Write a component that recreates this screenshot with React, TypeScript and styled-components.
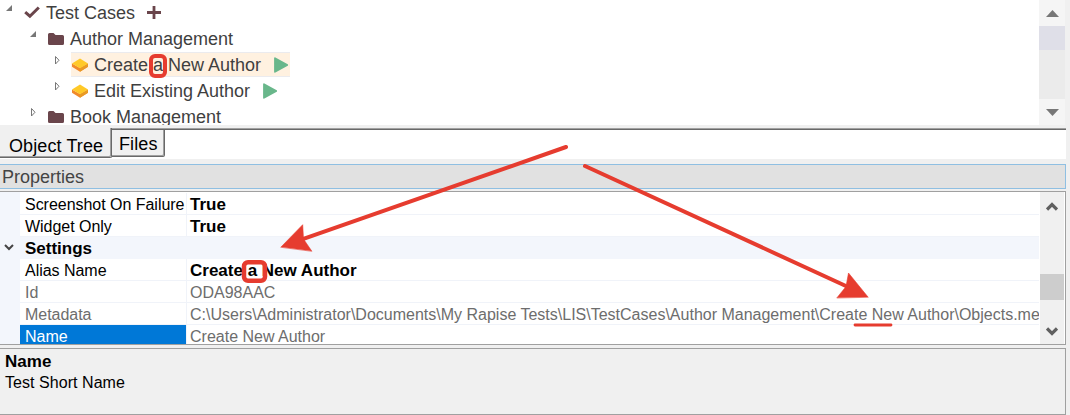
import React from "react";
import styled, { createGlobalStyle } from "styled-components";

const RED = "#e63c2f";

const GlobalStyle = createGlobalStyle`
  * { box-sizing: border-box; }
  body {
    margin: 0;
    background: #f0f0f0;
    font-family: "Liberation Sans", Arial, sans-serif;
    overflow: hidden;
  }
  svg { display: block; flex: none; }
`;

const Window = styled.div`
  position: relative;
  width: 1070px;
  height: 415px;
  overflow: hidden;
  display: flex;
  flex-direction: column;
  background: #f0f0f0;
`;

const TreePane = styled.div`
  display: flex;
  width: 1065px;
  height: 125px;
  background: #fff;
  overflow: hidden;
`;

const TreeList = styled.div`
  flex: 1;
  overflow: hidden;
`;

const TreeRow = styled.div<{ $indent: number }>`
  display: flex;
  height: 26px;
  padding-left: ${(p) => p.$indent}px;
`;

const Expander = styled.span`
  width: 17px;
  height: 26px;
  flex: none;
`;

const TreeItem = styled.div<{ $selected?: boolean }>`
  display: flex;
  align-items: center;
  height: 25px;
  padding: 0 2px 0 1px;
  background: ${(p) =>
    p.$selected ? "linear-gradient(#ebebee 1px, #fff1e0 1px, #fff1e0 24px, #ebebee 24px)" : "transparent"};
`;

const TreeLabel = styled.span<{ $width: number }>`
  width: ${(p) => p.$width}px;
  margin: 0 11px 0 6px;
  flex: none;
  font-size: 18px;
  line-height: 24px;
  white-space: nowrap;
  color: #3f3f3f;
`;

const TreeScroll = styled.div`
  display: flex;
  flex-direction: column;
  width: 26px;
  background: #ebebeb;
`;

const ScrollButton = styled.div`
  display: flex;
  align-items: center;
  justify-content: center;
  height: 26px;
  background: #f5f5f5;
`;

const TreeThumb = styled.div`
  height: 24px;
  margin-bottom: auto;
  background: #dfdfe8;
`;

const TabStrip = styled.div`
  display: flex;
  align-items: flex-start;
  width: 1066px;
  height: 31px;
  margin-top: 3px;
  border-top: 1px solid #a0a0a0;
  background: #fff;
  box-shadow: inset 0 1px #696969;
`;

const Tab = styled.div<{ $active?: boolean }>`
  display: flex;
  align-items: center;
  width: ${(p) => (p.$active ? 112 : 53)}px;
  height: ${(p) => (p.$active ? 30 : 28)}px;
  margin-top: ${(p) => (p.$active ? -1 : 0)}px;
  padding: ${(p) => (p.$active ? "7px 0 0 9px" : "2px 0 0 7px")};
  border: solid #696969;
  border-width: ${(p) => (p.$active ? "0 1px 1px 0" : "1px 1px 1px 0")};
  border-radius: 0 0 2px 0;
  box-shadow: inset -1px -1px #a0a0a0;
  background: #f0f0f0;
  color: #000;
  font-size: 18px;
  letter-spacing: ${(p) => (p.$active ? 0.1 : 0.1)}px;
  white-space: nowrap;
`;

const PropertiesHeader = styled.div`
  width: 1066px;
  height: 25px;
  margin-top: 5px;
  padding-left: 2px;
  border: 1px solid #8fbfe2;
  border-left: 0;
  background: #e1e1e1;
  color: #444;
  font-size: 18px;
  line-height: 24px;
`;

const GridPane = styled.div`
  display: flex;
  width: 1066px;
  height: 154px;
  margin-top: 2px;
  border: 1px solid #a0a0a0;
  border-left: 0;
  background: #fff;
`;

const Grid = styled.div`
  flex: none;
  width: 1039px;
  height: 152px;
  padding-top: 1px;
  overflow: hidden;
  background: linear-gradient(90deg, #f3f6fc 20px, #fff 20px);
`;

const GridRow = styled.div`
  display: flex;
  height: 22px;
  padding-left: 20px;
  font-size: 16px;
  line-height: 23px;
  white-space: nowrap;
`;

const KeyCell = styled.div<{ $muted?: boolean; $selected?: boolean }>`
  width: 167px;
  flex: none;
  padding-left: 5px;
  border-right: 1px solid #f0f3f9;
  border-bottom: 1px solid #f0f3f9;
  background: ${(p) => (p.$selected ? "#0078d7" : "#fff")};
  background-clip: padding-box;
  color: ${(p) => (p.$selected ? "#fff" : p.$muted ? "#6d6d6d" : "#000")};
  letter-spacing: -0.03px;
`;

const ValueCell = styled.div<{ $muted?: boolean }>`
  flex: 1;
  padding-left: 3px;
  overflow: hidden;
  border-bottom: 1px solid #f0f3f9;
  color: ${(p) => (p.$muted ? "#6d6d6d" : "#000")};
  font-weight: ${(p) => (p.$muted ? 400 : 700)};
  font-size: ${(p) => (p.$muted ? 16 : 17)}px;
`;

const CategoryRow = styled.div`
  display: flex;
  align-items: center;
  height: 22px;
  padding-left: 4px;
  background: #f3f6fc;
  font-size: 17px;
  font-weight: 700;
`;

const CategoryName = styled.span`
  margin-left: 11px;
  padding-top: 2px;
`;

const GridScroll = styled.div`
  display: flex;
  flex-direction: column;
  align-items: center;
  width: 24px;
  margin-left: 1px;
  padding: 10px 0 8px;
  background: #f0f0f0;
`;

const GridThumb = styled.div`
  width: 24px;
  height: 26px;
  margin: 63px 0 auto;
  background: #cdcdcd;
`;

const Description = styled.div`
  width: 1066px;
  height: 67px;
  margin-top: 3px;
  padding: 2px 5px;
  border: 1px solid #a0a0a0;
  border-left: 0;
  color: #000;
  font-size: 16px;
  line-height: 21px;
  letter-spacing: 0.05px;
`;

const DescriptionTitle = styled.div`
  font-weight: 700;
  font-size: 17px;
`;

const Annotations = styled.svg`
  position: absolute;
  inset: 0;
  pointer-events: none;
`;

const OpenMark = () => (
  <svg width="12" height="26"><path d="M6 5v6H0z" fill="#777" /></svg>
);
const ClosedMark = () => (
  <svg width="12" height="26"><path d="M1.5 4.5v7.5l3.5-3.75z" fill="#fff" stroke="#777" /></svg>
);
const Folder = () => (
  <svg width="16" height="26" viewBox="0 0 16 26">
    <path d="M0 8.5Q0 7 1.5 7H5.5L7.5 9H14.5Q16 9 16 10.5V17.5Q16 19 14.5 19H1.5Q0 19 0 17.5Z" fill="#6a454b" />
  </svg>
);
const Check = () => (
  <svg width="16" height="26"><path d="M1.2 12.2l4.7 4L14.8 7.5" fill="none" stroke="#6a454b" strokeWidth="3" /></svg>
);
const Plus = () => (
  <svg width="14" height="26"><path d="M0 12.5h14M7 6v13" stroke="#6a454b" strokeWidth="2.8" /></svg>
);
const TestCase = () => (
  <svg width="16" height="26" viewBox="0 0 16 26">
    <path d="M0 11.5l8 4.5 8-4.5v3.2l-8 5-8-5z" fill="#f18a2a" />
    <path d="M8 19.7v-4l8-4.2v3.2z" fill="#e99a24" />
    <path d="M0 11.5L8 6.5l8 5-8 4.8z" fill="#ffc928" />
  </svg>
);
const Play = () => (
  <svg width="14" height="26"><path d="M1 6.2L13.3 13 1 19.8z" fill="#69b78b" stroke="#69b78b" strokeWidth="1.8" strokeLinejoin="round" /></svg>
);
const Chevron = ({ down = false }: { down?: boolean }) => (
  <svg width="12" height="9">
    <path d={down ? "M1 1.5l5 5 5-5" : "M1 7.5l5-5 5 5"} fill="none" stroke="#606060" strokeWidth="3.2" />
  </svg>
);

type Node = {
  indent: number;
  open: boolean;
  icon: React.ReactNode;
  label: string;
  width: number;
  action?: React.ReactNode;
  selected?: boolean;
};

const TREE: Node[] = [
  { indent: 6, open: true, icon: <Check />, label: "Test Cases", width: 90, action: <Plus /> },
  { indent: 30, open: true, icon: <Folder />, label: "Author Management", width: 164 },
  { indent: 54, open: false, icon: <TestCase />, label: "Create a New Author", width: 169, action: <Play />, selected: true },
  { indent: 54, open: false, icon: <TestCase />, label: "Edit Existing Author", width: 158, action: <Play /> },
  { indent: 30, open: false, icon: <Folder />, label: "Book Management", width: 152 },
];

type Prop = { name: string; value: string; muted?: boolean; selected?: boolean };

const PROPS_TOP: Prop[] = [
  { name: "Screenshot On Failure", value: "True" },
  { name: "Widget Only", value: "True" },
];
const PROPS_SETTINGS: Prop[] = [
  { name: "Alias Name", value: "Create a New Author" },
  { name: "Id", value: "ODA98AAC", muted: true },
  {
    name: "Metadata",
    value: "C:\\Users\\Administrator\\Documents\\My Rapise Tests\\LIS\\TestCases\\Author Management\\Create New Author\\Objects.metadata",
    muted: true,
  },
  { name: "Name", value: "Create New Author", muted: true, selected: true },
];

const PropertyRow = ({ name, value, muted, selected }: Prop) => (
  <GridRow>
    <KeyCell $muted={muted} $selected={selected}>{name}</KeyCell>
    <ValueCell $muted={muted}>{value}</ValueCell>
  </GridRow>
);

export default function App() {
  return (
    <>
      <GlobalStyle />
      <Window>
        <TreePane>
          <TreeList>
            {TREE.map((n) => (
              <TreeRow key={n.label} $indent={n.indent}>
                <Expander>{n.open ? <OpenMark /> : <ClosedMark />}</Expander>
                <TreeItem $selected={n.selected}>
                  {n.icon}
                  <TreeLabel $width={n.width}>{n.label}</TreeLabel>
                  {n.action}
                </TreeItem>
              </TreeRow>
            ))}
          </TreeList>
          <TreeScroll>
            <ScrollButton>
              <svg width="13" height="7"><path d="M0 7L6.5 0 13 7z" fill="#777" /></svg>
            </ScrollButton>
            <TreeThumb />
            <ScrollButton>
              <svg width="13" height="7"><path d="M0 0h13L6.5 7z" fill="#777" /></svg>
            </ScrollButton>
          </TreeScroll>
        </TreePane>

        <TabStrip>
          <Tab $active>Object Tree</Tab>
          <Tab>Files</Tab>
        </TabStrip>

        <PropertiesHeader>Properties</PropertiesHeader>

        <GridPane>
          <Grid>
            {PROPS_TOP.map((p) => <PropertyRow key={p.name} {...p} />)}
            <CategoryRow>
              <svg width="10" height="8"><path d="M1 1l4 4 4-4" fill="none" stroke="#444" strokeWidth="2" /></svg>
              <CategoryName>Settings</CategoryName>
            </CategoryRow>
            {PROPS_SETTINGS.map((p) => <PropertyRow key={p.name} {...p} />)}
          </Grid>
          <GridScroll>
            <Chevron />
            <GridThumb />
            <Chevron down />
          </GridScroll>
        </GridPane>

        <Description>
          <DescriptionTitle>Name</DescriptionTitle>
          Test Short Name
        </Description>

        <Annotations width="1070" height="415" fill="none" stroke={RED} strokeLinecap="round">
          <rect x="151" y="56" width="14" height="20" rx="4" strokeWidth="4" />
          <rect x="244" y="262.2" width="21" height="18.6" rx="4" strokeWidth="4.5" />
          <path d="M566 147L302 239.3M585 166L847 286.5" strokeWidth="4" />
          <path d="M281 247L302.7 224.7 303.5 239 311.7 251zM868 297L848.5 273 846 286.5 837 297.7z" fill={RED} stroke={RED} strokeWidth="0.6" />
          <path d="M855 325h36" strokeWidth="2.8" />
        </Annotations>
      </Window>
    </>
  );
}
